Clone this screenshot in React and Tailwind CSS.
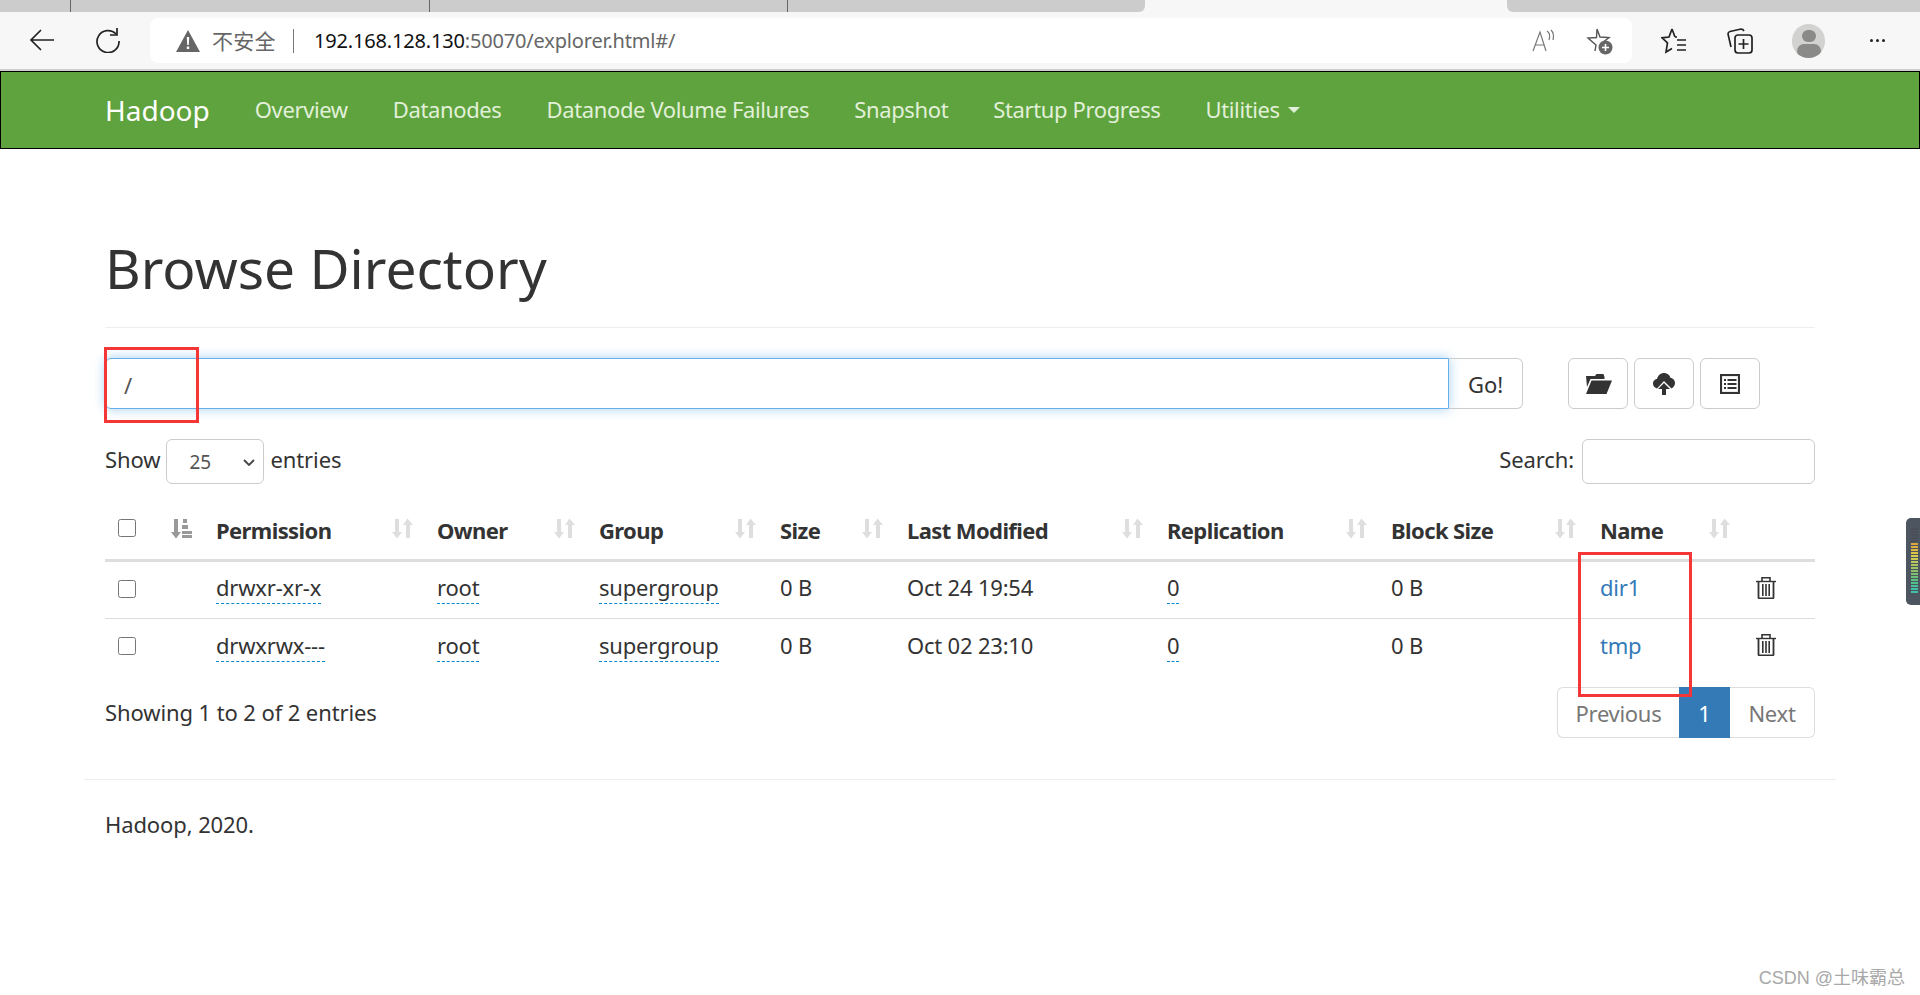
import React from "react";

const cols = [99, 221, 162, 181, 127, 260, 224, 209, 154, 73];
const heads = ["Permission", "Owner", "Group", "Size", "Last Modified", "Replication", "Block Size", "Name"];
const rows = [
  { p: "drwxr-xr-x", d: "Oct 24 19:54", n: "dir1", pad: "px-[12px] pb-[6px]" },
  { p: "drwxrwx---", d: "Oct 02 23:10", n: "tmp", pad: "px-[12px] pb-[4px]" },
];
const meter = [
  "#4a4f57", "#4a4f57", "#4a4f57", "#4a4f57", "#4a4f57",
  "#d9a53c", "#dcae3e", "#dcb840", "#dcc444", "#d8cc4c", "#cccc54", "#bcc85c", "#acc460",
  "#9cc464", "#8cc068", "#7cc070", "#6cc078", "#5cc080", "#50c08c", "#48c098", "#40c0a4", "#40c0a4",
];

function SortIcon() {
  return (
    <svg viewBox="0 0 21 21" className="w-[21px] h-[21px] shrink-0" fill="#dedede">
      <path d="M3 1h4v13h3l-5 6.500L0 14h3z" />
      <path d="M15.500 .5L21 7h-3v13h-4V7h-3z" />
    </svg>
  );
}
function SortActive() {
  return (
    <svg viewBox="0 0 21 21" className="w-[21px] h-[21px] shrink-0" fill="#999">
      <path d="M3 1h4v13h3l-5 6.500L0 14h3z" />
      <path d="M12 1h4v4h-4zM11 7h6v4h-6zM11 13h10v3h-10zM11 17h10v3h-10z" />
    </svg>
  );
}
function Trash() {
  return (
    <svg viewBox="0 0 20 23" className="w-[20px] h-[23px]" fill="none" stroke="#333" strokeWidth="1.6">
      <path d="M0 5.500h20" strokeWidth="1.400" />
      <path d="M6 5V1.800h8V5" />
      <path d="M2.500 6v15.500a.8.8 0 0 0 .8.8h13.400a.8.8 0 0 0 .8-.8V6" strokeWidth="1.800" />
      <path d="M6.800 8v12M10 8v12M13.200 8v12" />
    </svg>
  );
}

function Dotted({ children }) {
  return <span className="border-b border-dashed border-[#0088cc] pb-[1px]">{children}</span>;
}

export default function App() {
  return (
    <div className="relative w-[1920px] h-[995px] overflow-hidden bg-white text-[#333] text-[22px] leading-[30px] font-['Noto_Sans','Noto_Sans_CJK_SC',sans-serif] tracking-[-0.1px]">
      {/* tab strip */}
      <div className="flex h-[12px] bg-[#f7f7f7]">
        <div className="w-[71px] bg-[#cccccc] border-r border-[#666]" />
        <div className="w-[359px] bg-[#cccccc] border-r border-[#666]" />
        <div className="w-[358px] bg-[#cccccc] border-r border-[#666]" />
        <div className="w-[357px] bg-[#cccccc] rounded-br-[6px]" />
        <div className="w-[362px]" />
        <div className="flex-1 bg-[#cccccc] rounded-bl-[6px]" />
      </div>
      {/* toolbar */}
      <div className="flex items-center h-[57px] bg-[#f7f7f7] relative">
        <svg viewBox="0 0 26 24" className="ml-[29px] -mt-[2px] w-[26px] h-[24px]" fill="none" stroke="#222" strokeWidth="1.700">
          <path d="M25 12H2M12 2L2 12l10 10" />
        </svg>
        <svg viewBox="0 0 26 26" className="ml-[40px] -mt-[2px] w-[26px] h-[26px]" fill="none" stroke="#222" strokeWidth="1.700">
          <path d="M21 7a11 11 0 1 0 3 7" />
          <path d="M22 1v7h-7" />
        </svg>
        <div className="ml-[29px] flex items-center w-[1482px] h-[45px] bg-white rounded-[8px]">
          <svg viewBox="0 0 24 22" className="ml-[26px] w-[24px] h-[22px]">
            <path d="M12 0l12 22H0z" fill="#666" />
            <path d="M10.800 7h2.400l-.4 8h-1.600zM10.800 16.500h2.400v2.400h-2.400z" fill="#fff" />
          </svg>
          <span className="ml-[12px] text-[21px] text-[#666] tracking-[0.3px]">不安全</span>
          <span className="ml-[17px] w-[1px] h-[24px] bg-[#777]" />
          <span className="ml-[20px] text-[20px] tracking-[-0.17px] text-[#111]">
            192.168.128.130<span className="text-[#666]">:50070/explorer.html#/</span>
          </span>
          <div className="ml-auto flex items-center">
            <svg viewBox="0 0 26 24" className="w-[26px] h-[24px] mr-[28px]" fill="none" stroke="#777" strokeWidth="1.200">
              <path d="M2 22L9 3l6 19M4.500 16h9" />
              <path d="M16 2c3 2 3 6 2 9M20 1c3 3 3 6 2 10" />
            </svg>
            <svg viewBox="0 0 28 28" className="w-[28px] h-[28px] mr-[19px]" fill="none" stroke="#555" strokeWidth="1.400">
              <path d="M12 2l3 8 9 .5-7 5.500M10 24l1-6-8-7 8.500-.5L12 2" />
              <circle cx="20.500" cy="20.500" r="7" fill="#666" stroke="none" />
              <path d="M20.500 17v7M17 20.500h7" stroke="#fff" strokeWidth="1.600" />
            </svg>
          </div>
        </div>
        <svg viewBox="0 0 28 28" className="ml-[29px] w-[28px] h-[28px]" fill="none" stroke="#222" strokeWidth="1.700">
          <path d="M11 2l3 8h0M11 2L8 10l-7 .8 5.500 5L5 25l6-3.500M14 10h2" />
          <path d="M16 13h9M16 18h9M16 23h9" />
        </svg>
        <svg viewBox="0 0 28 28" className="ml-[37px] w-[28px] h-[28px]" fill="none" stroke="#222" strokeWidth="1.700">
          <path d="M5 20L2 7q0-2 2-2.500L15 2q2 0 3 2" />
          <rect x="9" y="8" width="17" height="18" rx="3" />
          <path d="M17.500 12v10M12.500 17h10" />
        </svg>
        <div className="ml-[38px] w-[33px] h-[34px] rounded-full bg-[#d2d2d0] flex flex-col items-center overflow-hidden">
          <div className="mt-[6px] w-[14px] h-[14px] rounded-full bg-[#8a8a88]" />
          <div className="mt-[2px] w-[24px] h-[16px] rounded-full bg-[#8a8a88]" />
        </div>
        <div className="ml-[45px] flex gap-[3px]">
          <span className="w-[3px] h-[3px] rounded-full bg-[#222]" />
          <span className="w-[3px] h-[3px] rounded-full bg-[#222]" />
          <span className="w-[3px] h-[3px] rounded-full bg-[#222]" />
        </div>
      </div>
      <div className="h-[2px] bg-[#cfcfcf]" />
      {/* navbar */}
      <nav className="flex items-center h-[78px] bg-[#5fa33e] border border-black pl-[104px] text-[#e2f0d9]">
        <span className="text-[28px] text-white tracking-[0px] mr-[45px]">Hadoop</span>
        <div className="flex items-center gap-[45px] -mt-[2px] tracking-[-0.37px]">
          <span>Overview</span>
          <span>Datanodes</span>
          <span>Datanode Volume Failures</span>
          <span>Snapshot</span>
          <span>Startup Progress</span>
          <span className="flex items-center">
            Utilities
            <span className="ml-[8px] mt-[2px] w-0 h-0 border-x-[6px] border-x-transparent border-t-[6px] border-t-[#e2f0d9]" />
          </span>
        </div>
      </nav>
      {/* content */}
      <main className="px-[105px]">
        <div className="mt-[89px] border-b border-[#eeeeee] pb-[29px]">
          <h1 className="text-[55px] leading-[60px] tracking-[0px]">Browse Directory</h1>
        </div>
        <div className="mt-[30px] flex h-[51px]">
          <input
            defaultValue="/"
            className="pl-[18px] pt-[3px] w-[1344px] h-full border border-[#66afe9] rounded-l-[6px] shadow-[0_0_12px_rgba(102,175,233,0.6)] outline-none text-[#555]"
          />
          <div className="w-[74px] h-full flex items-center justify-center border border-l-0 border-[#cccccc] rounded-r-[6px]">Go!</div>
          <div className="ml-[45px] flex gap-[6px]">
            <div className="w-[60px] h-full flex items-center justify-center border border-[#cccccc] rounded-[6px]">
              <svg viewBox="0 0 26 20" className="w-[26px] h-[20px] ml-[1px]" fill="#333">
                <path d="M0 2h9l1.500-2h7l1 3v2H4.500L1 13z" />
                <path d="M5.500 6.500H26L20.500 20H0z" />
              </svg>
            </div>
            <div className="w-[60px] h-full flex items-center justify-center border border-[#cccccc] rounded-[6px]">
              <svg viewBox="0 0 22 22" className="w-[22px] h-[22px]" fill="#333">
                <path d="M4 15.500C1 14.500 0 12.500 0 10.500c0-3 2.500-4.500 4-4.500C5 2 8 0 11 0c3.500 0 6 2.500 6.500 5 2.500 0 4.500 2.500 4.500 5 0 2.500-1.500 4.500-3.500 5.500L11 8z" />
                <path d="M11 10l6 6h-4v6H9v-6H5z" />
              </svg>
            </div>
            <div className="w-[60px] h-full flex items-center justify-center border border-[#cccccc] rounded-[6px]">
              <svg viewBox="0 0 20 20" className="w-[20px] h-[20px]" fill="none" stroke="#333">
                <rect x="1" y="1" width="18" height="18" strokeWidth="2.200" />
                <path d="M4 6h2M7.500 6h9M4 10h2M7.500 10h9M4 14h2M7.500 14h9" strokeWidth="1.800" />
              </svg>
            </div>
          </div>
        </div>
        <div className="mt-[30px] flex items-center h-[45px]">
          <span className="-mt-[6px]">Show</span>
          <div className="relative ml-[6px] w-[98px] h-[45px]">
            <select
              defaultValue="25"
              className="appearance-none w-full h-full pl-[22px] bg-white border border-[#cccccc] rounded-[6px] text-[19px] text-[#555]"
            >
              <option value="25">25</option>
            </select>
            <svg viewBox="0 0 12 7" className="absolute right-[9px] top-[20px] w-[12px] h-[7px] pointer-events-none" fill="none" stroke="#444" strokeWidth="1.800">
              <path d="M1 1l5 5 5-5" />
            </svg>
          </div>
          <span className="ml-[6px] -mt-[6px]">entries</span>
          <span className="ml-auto -mt-[6px]">Search:</span>
          <input className="ml-[8px] w-[233px] h-[45px] border border-[#cccccc] rounded-[6px] outline-none" />
        </div>
        <table className="mt-[16px] w-[1710px] table-fixed border-collapse tracking-[-0.2px]">
          <colgroup>
            {cols.map((w, i) => (
              <col key={i} style={{ width: w }} />
            ))}
          </colgroup>
          <thead>
            <tr className="h-[60px] border-b-[3px] border-[#dddddd]">
              <th className="pl-[13px] pr-[12px] font-normal">
                <div className="flex items-center justify-between -mt-[2px]">
                  <input type="checkbox" className="w-[18px] h-[18px] m-0" />
                  <SortActive />
                </div>
              </th>
              {heads.map((h) => (
                <th key={h} className="px-[12px] text-left font-bold tracking-[-0.6px]">
                  <div className="flex items-start justify-between">
                    <span className="mt-[1px]">{h}</span>
                    <span className="mt-[4px]"><SortIcon /></span>
                  </div>
                </th>
              ))}
              <th />
            </tr>
          </thead>
          <tbody>
            {rows.map((r, i) => (
              <tr key={r.n} className={i === 0 ? "h-[58px] border-b border-[#dddddd]" : "h-[57px]"}>
                <td className="pl-[13px]">
                  <input type="checkbox" className="block w-[18px] h-[18px] m-0 -mt-[2px]" />
                </td>
                <td className={r.pad}><Dotted>{r.p}</Dotted></td>
                <td className={r.pad}><Dotted>root</Dotted></td>
                <td className={r.pad}><Dotted>supergroup</Dotted></td>
                <td className={r.pad}>0 B</td>
                <td className={r.pad}>{r.d}</td>
                <td className={r.pad}><Dotted>0</Dotted></td>
                <td className={r.pad}>0 B</td>
                <td className={r.pad + " text-[#337ab7]"}>{r.n}</td>
                <td className="pl-[14px] pb-[4px]"><Trash /></td>
              </tr>
            ))}
          </tbody>
        </table>
        <div className="mt-[12px] flex items-start h-[51px]">
          <span className="mt-[10px]">Showing 1 to 2 of 2 entries</span>
          <div className="ml-auto flex h-[51px] text-[#777] tracking-[-0.3px]">
            <div className="w-[122px] flex items-center justify-center border border-r-0 border-[#dddddd] rounded-l-[6px]">Previous</div>
            <div className="w-[51px] flex items-center justify-center bg-[#337ab7] text-white">1</div>
            <div className="w-[85px] flex items-center justify-center border border-l-0 border-[#dddddd] rounded-r-[6px]">Next</div>
          </div>
        </div>
      </main>
      <hr className="mx-[84px] mt-[41px] border-[#eeeeee]" />
      <p className="mt-[29px] pl-[105px]">Hadoop, 2020.</p>

      {/* annotation overlays */}
      <div className="absolute left-[104px] top-[347px] w-[95px] h-[76px] border-[3px] border-[#f53636]" />
      <div className="absolute left-[1578px] top-[552px] w-[114px] h-[145px] border-[3px] border-[#f53636]" />
      <div className="absolute right-[15px] top-[968px] text-[18px] leading-[20px] tracking-[0px] text-[#a8a8a8] font-['Liberation_Sans','Noto_Sans_CJK_SC',sans-serif]">CSDN @土味霸总</div>
      <div className="absolute left-[1906px] top-[518px] w-[14px] h-[87px] rounded-l-[5px] bg-[#4d5560] flex flex-col gap-[1px] pl-[5px] pr-[2px] pt-[10px]">
        {meter.map((c, i) => (
          <span key={i} className="h-[2px] shrink-0" style={{ background: c }} />
        ))}
      </div>
    </div>
  );
}
